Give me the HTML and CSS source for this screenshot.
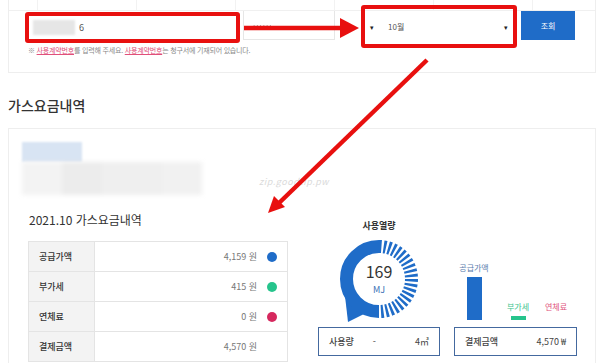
FILE: index.html
```html
<!DOCTYPE html>
<html lang="ko">
  <head>
    <meta charset="UTF-8" />
    <meta name="viewport" content="width=device-width, initial-scale=1.0" />
    <title>가스요금내역 조회</title>
    <link rel="stylesheet" href="styles.css">
  </head>
  <body>
    <div class="page">
      <!-- 조회 폼 -->
      <div class="search-card">
        <div class="tab-strip">
          <span class="tab"></span><span class="tab"></span><span class="tab"></span>
          <span class="tab"></span><span class="tab"></span><span class="tab"></span>
        </div>
        <div class="form-row">
          <div class="field field-number mark">
            <span class="blur-box"></span>
            <span class="field-text">6</span>
          </div>
          <div class="field field-year">
            <span class="blur-text">······</span>
          </div>
          <div class="field field-month mark">
            <span class="caret">▾</span>
            <span class="field-text">10월</span>
            <span class="caret caret-right">▾</span>
          </div>
          <button class="search-btn">조회</button>
        </div>
        <p class="notice">※ <u>사용계약번호</u>를 입력해 주세요. <u>사용계약번호</u>는 청구서에 기재되어 있습니다.</p>
      </div>

      <h2 class="section-title">가스요금내역</h2>

      <!-- 요금 내역 -->
      <div class="bill-card">
        <div class="blur-blue"></div>
        <div class="blur-gray">
          <span class="bg1"></span><span class="bg2"></span><span class="bg3"></span>
        </div>
        <span class="watermark">zip.goodtip.pw</span>

        <div class="bill-body">
          <div class="bill-left">
            <h3 class="bill-title">2021.10 가스요금내역</h3>
            <table class="bill-table">
              <tr>
                <th>공급가액</th>
                <td><span>4,159 원</span><i class="dot dot-blue"></i></td>
              </tr>
              <tr>
                <th>부가세</th>
                <td><span>415 원</span><i class="dot dot-green"></i></td>
              </tr>
              <tr>
                <th>연체료</th>
                <td><span>0 원</span><i class="dot dot-pink"></i></td>
              </tr>
              <tr>
                <th>결제금액</th>
                <td><span>4,570 원</span><i class="dot"></i></td>
              </tr>
            </table>
          </div>

          <div class="usage">
            <div class="usage-title">사용열량</div>
            <svg class="donut" width="86" height="88" viewBox="0 0 86 88">
              <polygon points="9,60 12,86 30,77" fill="#1f6cc8" />
              <path d="M 43 75.5 A 32.5 32.5 0 0 1 43 10.5" fill="none" stroke="#1f6cc8" stroke-width="13" />
              <path d="M 43 10.5 A 32.5 32.5 0 0 1 43 75.5" fill="none" stroke="#1f6cc8" stroke-width="13" stroke-dasharray="2.5 2.14" />
              <text x="43" y="42" text-anchor="middle" class="donut-num">169</text>
              <text x="43" y="57" text-anchor="middle" class="donut-unit">MJ</text>
            </svg>
            <div class="info-box">
              <span class="box-label">사용량</span><span class="dash">-</span><span>4㎥</span>
            </div>
          </div>

          <div class="charges">
            <div class="bars">
              <div class="bar-col">
                <span class="bar-label label-blue">공급가액</span>
                <span class="bar bar-blue"></span>
              </div>
              <div class="bar-col">
                <span class="bar-label label-green">부가세</span>
                <span class="bar bar-green"></span>
              </div>
              <div class="bar-col bar-col-last">
                <span class="bar-label label-pink">연체료</span>
              </div>
            </div>
            <div class="info-box">
              <span class="box-label">결제금액</span><span>4,570 ₩</span>
            </div>
          </div>
        </div>
      </div>

      <!-- 빨간 안내 화살표 -->
      <svg class="arrows" width="600" height="363" viewBox="0 0 600 363">
        <line x1="244" y1="28" x2="342" y2="28" stroke="#e8100f" stroke-width="4.5" />
        <polygon points="340,18 359,28 340,38" fill="#e8100f" />
        <line x1="427" y1="60" x2="279" y2="203" stroke="#e8100f" stroke-width="4.5" />
        <polygon points="268,213 285,207 274,196" fill="#e8100f" />
      </svg>
    </div>
  </body>
</html>
```

FILE: styles.css
```css
/* Global Styles */
body {
  margin: 0;
  font-family: "Noto Sans CJK KR", "Noto Sans", sans-serif;
  color: #333;
  background-color: #fff;
}

.page {
  position: relative;
  width: 600px;
  height: 363px;
  overflow: hidden;
  padding: 0 4px 0 8px;
  box-sizing: border-box;
}

/* Search Card */
.search-card {
  border: 1px solid #eee;
  border-top: none;
  padding: 0 0 17px 0;
}

.tab-strip {
  display: flex;
  height: 10px;
  border-bottom: 1px solid #f0f0f0;
}

.tab {
  width: 98px;
  border-right: 1px solid #f2f2f2;
}

.tab:first-child {
  width: 28px;
}

.form-row {
  display: flex;
  align-items: flex-start;
  height: 32px;
  padding-left: 16px;
}

.field {
  box-sizing: border-box;
  display: flex;
  align-items: center;
  font-size: 9px;
  color: #555;
}

.mark {
  border: 4px solid #e8100f;
  border-radius: 3px;
}

.field-number {
  width: 215px;
  height: 31px;
  margin-top: 1px;
  padding-left: 4px;
}

.blur-box {
  width: 42px;
  height: 15px;
  background-color: #e6e6e6;
  filter: blur(1px);
}

.field-text {
  margin-left: 4px;
}

.field-year {
  width: 92px;
  height: 29px;
  margin-left: 3px;
  border: 1px solid #e6e6e6;
  border-top: none;
  padding-left: 9px;
}

.blur-text {
  color: #999;
  font-size: 8px;
  letter-spacing: 1px;
  filter: blur(0.6px);
}

.field-month {
  width: 156px;
  height: 43px;
  margin-top: -6px;
  margin-left: 26px;
  padding: 0 5px;
  font-size: 8px;
}

.caret {
  font-size: 7px;
  color: #222;
}

.field-month .field-text {
  margin-left: 14px;
}

.caret-right {
  margin-left: auto;
}

.search-btn {
  width: 54px;
  height: 29px;
  margin-left: 4px;
  border: none;
  background-color: #1f6cc8;
  color: #fff;
  font-family: inherit;
  font-size: 8px;
  padding: 0;
}

.notice {
  margin: 3px 0 0 19px;
  font-size: 7px;
  line-height: 9px;
  letter-spacing: -0.2px;
  color: #888;
}

.notice u {
  color: #e0507a;
}

/* Section Title */
.section-title {
  margin: 22px 0 13px 0;
  font-size: 14px;
  line-height: 20px;
  font-weight: 500;
  color: #333;
}

/* Bill Card */
.bill-card {
  position: relative;
  border: 1px solid #eee;
  height: 260px;
  padding: 13px 0 0 19px;
}

.blur-blue {
  width: 60px;
  height: 20px;
  margin-left: -6px;
  background-color: #d8e4f3;
  filter: blur(1px);
}

.blur-gray {
  display: flex;
  width: 180px;
  height: 33px;
  margin-left: -6px;
  background-color: #f1f1f1;
  filter: blur(2px);
}

.blur-gray span {
  display: block;
  height: 100%;
}

.bg1 {
  width: 40px;
  background-color: #f3f3f3;
}

.bg2 {
  width: 40px;
  background-color: #ececec;
}

.bg3 {
  width: 60px;
  background-color: #efefef;
}

.watermark {
  position: absolute;
  left: 250px;
  top: 46px;
  font-size: 9px;
  font-style: italic;
  color: #dadada;
  letter-spacing: 0.5px;
}

.bill-body {
  display: flex;
  align-items: flex-start;
  margin-top: 17px;
}

.bill-left {
  width: 260px;
}

.bill-title {
  margin: 0 0 13px 1px;
  font-size: 12px;
  line-height: 16px;
  font-weight: 400;
}

.bill-table {
  width: 260px;
  border-collapse: collapse;
  font-size: 9px;
}

.bill-table th,
.bill-table td {
  height: 29px;
  border: 1px solid #e4e4e4;
  padding: 0;
}

.bill-table th {
  width: 55px;
  background-color: #f3f3f3;
  text-align: left;
  padding-left: 10px;
  font-weight: 500;
  color: #333;
}

.bill-table td {
  text-align: right;
  padding-right: 10px;
  color: #777;
}

.bill-table td span,
.dot {
  vertical-align: middle;
}

.dot {
  display: inline-block;
  width: 10px;
  height: 10px;
  margin-left: 10px;
  border-radius: 50%;
}

.dot-blue {
  background-color: #1f6cc8;
}

.dot-green {
  background-color: #26c48c;
}

.dot-pink {
  background-color: #d6285e;
}

/* Usage Donut */
.usage {
  display: flex;
  flex-direction: column;
  align-items: center;
  width: 122px;
  margin-left: 30px;
}

.usage-title {
  margin-top: 8px;
  font-size: 9px;
  line-height: 12px;
  font-weight: 700;
  color: #333;
}

.donut {
  margin-top: 4px;
}

.donut-num {
  font-size: 16px;
  fill: #333;
}

.donut-unit {
  font-size: 9px;
  fill: #3a6fb5;
}

.info-box {
  box-sizing: border-box;
  display: flex;
  align-items: center;
  justify-content: space-between;
  width: 122px;
  height: 29px;
  margin-top: 3px;
  padding: 0 10px;
  border: 1.5px solid #44699f;
  font-size: 9px;
  color: #444;
}

.box-label {
  font-weight: 500;
}

.dash {
  margin-right: 20px;
}

/* Charge Bars */
.charges {
  display: flex;
  flex-direction: column;
  justify-content: flex-end;
  width: 123px;
  height: 144px;
  margin-left: 14px;
}

.charges .info-box {
  width: 123px;
  margin-top: 7px;
}

.bars {
  display: flex;
  align-items: flex-end;
}

.bar-col {
  display: flex;
  flex-direction: column;
  align-items: center;
  width: 40px;
}

.bar-col:nth-child(2) {
  width: 48px;
}

.bar-col-last {
  width: 28px;
  padding-bottom: 4px;
}

.bar-label {
  font-size: 8px;
  line-height: 10px;
  margin-bottom: 4px;
}

.label-blue {
  color: #5a7eae;
}

.label-green {
  color: #3cc48e;
}

.label-pink {
  color: #e0507a;
}

.bar {
  display: block;
  width: 15px;
}

.bar-blue {
  height: 43px;
  background-color: #1f6cc8;
}

.bar-green {
  height: 4px;
  background-color: #26c48c;
}

/* Annotation Arrows */
.arrows {
  position: absolute;
  top: 0;
  left: 0;
  pointer-events: none;
}
```
